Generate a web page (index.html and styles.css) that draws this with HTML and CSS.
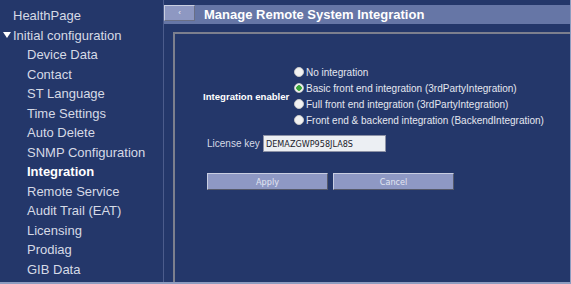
FILE: index.html
```html
<!DOCTYPE html>
<html lang="en">
<head>
  <meta charset="UTF-8" />
  <title>Manage Remote System Integration</title>
  <link rel="stylesheet" href="styles.css">
</head>
<body>
  <div class="page">
    <nav class="sidebar">
      <a class="nav-item">HealthPage</a>
      <a class="nav-item group"><span class="caret"></span>Initial configuration</a>
      <a class="nav-item sub">Device Data</a>
      <a class="nav-item sub">Contact</a>
      <a class="nav-item sub">ST Language</a>
      <a class="nav-item sub">Time Settings</a>
      <a class="nav-item sub">Auto Delete</a>
      <a class="nav-item sub">SNMP Configuration</a>
      <a class="nav-item sub active">Integration</a>
      <a class="nav-item sub">Remote Service</a>
      <a class="nav-item sub">Audit Trail (EAT)</a>
      <a class="nav-item sub">Licensing</a>
      <a class="nav-item sub">Prodiag</a>
      <a class="nav-item sub">GIB Data</a>
    </nav>

    <main class="main">
      <div class="titlebar">
        <button class="back-btn">&lsaquo;</button>
        <h1>Manage Remote System Integration</h1>
      </div>

      <div class="panel">
        <!-- Integration options -->
        <div class="enabler">
          <div class="enabler-label">Integration enabler</div>
          <div class="options">
            <label class="option"><span class="radio"></span>No integration</label>
            <label class="option"><span class="radio checked"></span>Basic front end integration (3rdPartyIntegration)</label>
            <label class="option"><span class="radio"></span>Full front end integration (3rdPartyIntegration)</label>
            <label class="option"><span class="radio"></span>Front end &amp; backend integration (BackendIntegration)</label>
          </div>
        </div>

        <div class="license">
          <span class="license-label">License key</span>
          <input type="text" class="license-input" value="DEMAZGWP958JLA8S" />
        </div>

        <div class="actions">
          <button class="btn">Apply</button>
          <button class="btn">Cancel</button>
        </div>
      </div>
    </main>
  </div>
</body>
</html>
```
FILE: styles.css
```css
body {
  margin: 0;
  background: #24376a;
  font-family: 'Liberation Sans', Arial, sans-serif;
  overflow: hidden;
}

.page {
  display: flex;
  height: 282px;
  border-bottom: 2px solid #8d9cc0;
}

.sidebar {
  width: 163px;
  border-right: 1px solid #4c5c8c;
  display: flex;
  flex-direction: column;
  padding-top: 6px;
}

.nav-item {
  display: flex;
  align-items: center;
  height: 19.5px;
  padding-left: 13px;
  font-size: 13px;
  color: #d6dae6;
  white-space: nowrap;
}

.nav-item.group {
  padding-left: 3px;
}

.nav-item.sub {
  padding-left: 27px;
}

.nav-item.active {
  color: #ffffff;
  font-weight: bold;
}

.caret {
  width: 0;
  height: 0;
  border-left: 4px solid transparent;
  border-right: 4px solid transparent;
  border-top: 6px solid #ffffff;
  margin-right: 2px;
}

.main {
  flex: 1;
  display: flex;
  flex-direction: column;
  border-right: 1px solid #8d9cc0;
}

.titlebar {
  margin-top: 5px;
  height: 19px;
  background: #6676a6;
  display: flex;
  align-items: center;
}

.back-btn {
  width: 31px;
  height: 16px;
  margin-top: -3px;
  padding: 0;
  background: #8e98c2;
  border: 1px solid;
  border-color: #c9cee0 #6a6f85 #6a6f85 #c9cee0;
  color: #e8ebf4;
  font-size: 8px;
  line-height: 12px;
}

.titlebar h1 {
  margin: 0 0 0 9px;
  font-size: 13px;
  color: #ffffff;
  font-weight: bold;
}

.panel {
  flex: 1;
  margin: 8px 0 0 9px;
  border-top: 2px solid #7c7f8e;
  border-left: 2px solid #7c7f8e;
  padding: 30px 0 0 28px;
  font-size: 10px;
  color: #e4e7f0;
}

.enabler {
  display: flex;
  align-items: center;
}

.enabler-label {
  width: 91px;
  font-size: 9.6px;
  font-weight: bold;
  color: #ffffff;
}

.options {
  display: flex;
  flex-direction: column;
}

.option {
  display: flex;
  align-items: center;
  height: 16px;
  white-space: nowrap;
}

.radio {
  width: 8px;
  height: 8px;
  border-radius: 50%;
  background: #f2f2f2;
  border: 1px solid #c8c8c8;
  margin-right: 2px;
  box-sizing: content-box;
}

.radio.checked {
  background: radial-gradient(circle, #3aa83a 0 2.5px, #f2f2f2 3px);
}

.license {
  display: flex;
  align-items: center;
  margin: 7px 0 0 4px;
}

.license-label {
  width: 56px;
  color: #d6dae6;
}

.license-input {
  width: 117px;
  height: 15px;
  padding: 0 2px;
  border: 1px solid #8d92a6;
  background: #eceff3;
  font-family: 'DejaVu Sans Condensed', 'DejaVu Sans', sans-serif;
  font-size: 9px;
  color: #1a1a2a;
}

.actions {
  display: flex;
  gap: 5px;
  margin: 21px 0 0 4px;
}

.btn {
  width: 121px;
  height: 17px;
  padding: 0;
  background: #8e98c4;
  border: 1px solid;
  border-color: #c9cee2 #55596a #55596a #c9cee2;
  color: #e2e6f2;
  font-family: 'DejaVu Sans Condensed', 'DejaVu Sans', sans-serif;
  font-size: 9px;
}
```
